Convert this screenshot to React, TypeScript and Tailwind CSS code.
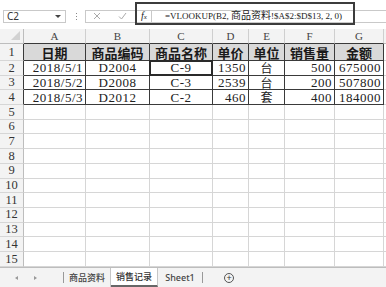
import React from "react";

const cols = ["A", "B", "C", "D", "E", "F", "G"];
const heads = ["日期", "商品编码", "商品名称", "单价", "单位", "销售量", "金额"];
const rows = [
  ["2018/5/1", "D2004", "C-9", "1350", "台", "500", "675000"],
  ["2018/5/2", "D2008", "C-3", "2539", "台", "200", "507800"],
  ["2018/5/3", "D2012", "C-2", "460", "套", "400", "184000"],
];
const align = [
  "justify-end pr-[2px]",
  "justify-center",
  "justify-center",
  "justify-end pr-[2px]",
  "justify-center",
  "justify-end pr-[2px]",
  "justify-end pr-[2px]",
];

const serif = "font-['Liberation_Serif','Noto_Sans_CJK_SC',serif]";
const sans = "font-['Noto_Sans','Noto_Sans_CJK_SC',sans-serif]";
const cjk = "font-['Noto_Sans_CJK_SC',sans-serif]";

function FormulaBar() {
  return (
    <div className="relative h-[29px] shrink-0 bg-white flex items-center pt-[3px]">
      {/* Name box */}
      <div className={`ml-[3px] w-[63px] h-[13px] border border-[#c9c9c9] flex items-center justify-between pl-[3px] pr-[4px] text-[10px] text-[#333] ${sans}`}>
        <span>C2</span>
        <span className="w-0 h-0 border-x-[3px] border-x-transparent border-t-[3px] border-t-[#444]" />
      </div>
      {/* Grip */}
      <div className="ml-[10px] flex flex-col gap-[2px]">
        <span className="w-[1px] h-[1px] bg-[#888]" />
        <span className="w-[1px] h-[1px] bg-[#888]" />
        <span className="w-[1px] h-[1px] bg-[#888]" />
      </div>
      {/* Input */}
      <div className="ml-[8px] flex-1 h-[13px] border border-[#c9c9c9] border-r-0 flex items-center">
        <svg width="8" height="8" viewBox="0 0 8 8" className="ml-[7px]">
          <path d="M1 1 L7 7 M7 1 L1 7" stroke="#aaa" strokeWidth="1" />
        </svg>
        <svg width="9" height="8" viewBox="0 0 9 8" className="ml-[17px]">
          <path d="M1 4.5 L3.5 7 L8 1" stroke="#aaa" strokeWidth="1" fill="none" />
        </svg>
        <span className="ml-[14px] text-[10px] italic text-[#222] font-['Liberation_Serif',serif] leading-none">
          f<span className="text-[7px]">x</span>
        </span>
        <span className="ml-[4px] w-[1px] h-[13px] bg-[#c9c9c9]" />
        <span className="ml-[13px] text-[9px] leading-none text-[#222] whitespace-nowrap font-['Liberation_Serif','Noto_Sans_CJK_SC',serif]">
          =VLOOKUP(B2, <span className="text-[10px]">商品资料</span>!$A$2:$D$13, 2, 0)
        </span>
      </div>
      {/* Highlight frame */}
      <div className="absolute left-[135px] top-[2px] w-[220px] h-[23px] border-2 border-[#3c3c3c]" />
    </div>
  );
}

function Sheet() {
  const rowNums = Array.from({ length: 15 }, (_, i) => i + 1);
  return (
    <div className="flex-1 overflow-hidden bg-white">
      <div className="grid grid-cols-[24px_62px_64px_63px_36px_36px_50px_49px_1fr] grid-rows-[15px_17px_repeat(15,14.7px)] leading-none">
        {/* Column header */}
        <div className="relative bg-[#f3f3f3] border-r border-b border-[#bdbdbd]">
          <span className="absolute right-[3px] bottom-[3px] w-0 h-0 border-l-[9px] border-l-transparent border-b-[9px] border-b-[#d2d2d2]" />
        </div>
        {cols.map((c) => (
          <div
            key={c}
            className={`bg-[#f3f3f3] border-r border-[#cfcfcf] border-b border-b-[#3a3a3a] flex items-center justify-center text-[11px] text-[#444] ${serif}`}
          >
            {c}
          </div>
        ))}
        <div className="bg-[#f3f3f3] border-b border-[#bdbdbd]" />

        {rowNums.map((n) => {
          const inTable = n <= 4;
          return (
            <React.Fragment key={n}>
              <div
                className={`bg-[#f3f3f3] border-b border-[#d6d6d6] border-r flex items-center justify-center text-[12.5px] text-[#333] ${serif} ${
                  inTable ? "border-r-[#3a3a3a]" : "border-r-[#bdbdbd]"
                }`}
              >
                {n}
              </div>
              {cols.map((c, ci) => {
                if (n === 1) {
                  return (
                    <div
                      key={c}
                      className={`bg-[#d9d9d9] border-r border-b border-[#3a3a3a] flex items-center justify-center text-[13px] font-bold text-[#1a1a1a] ${cjk}`}
                    >
                      {heads[ci]}
                    </div>
                  );
                }
                if (inTable) {
                  const v = rows[n - 2][ci];
                  const sel = n === 2 && c === "C";
                  const font = c === "E" ? `${cjk} text-[12px]` : `${serif} text-[13px] tracking-[0.5px]`;
                  return (
                    <div
                      key={c}
                      className={`relative border-r border-b border-[#3a3a3a] flex items-center text-[#222] ${font} ${align[ci]}`}
                    >
                      {v}
                      {sel && <span className="absolute -left-[1px] -top-[1px] -right-[1px] -bottom-[1px] border-2 border-[#2a2a2a]" />}
                    </div>
                  );
                }
                return <div key={c} className="border-r border-b border-[#d6d6d6]" />;
              })}
              <div className="border-b border-[#d6d6d6]" />
            </React.Fragment>
          );
        })}
      </div>
    </div>
  );
}

function Tabs() {
  return (
    <div className={`h-[20px] shrink-0 bg-[#f3f3f3] border-t border-[#bdbdbd] flex items-stretch text-[9px] text-[#444] ${sans}`}>
      <div className="w-[63px] flex items-center">
        <span className="ml-[15px] w-0 h-0 border-y-[2.5px] border-y-transparent border-r-[3px] border-r-[#999]" />
        <span className="ml-[16px] w-0 h-0 border-y-[2.5px] border-y-transparent border-l-[3px] border-l-[#999]" />
      </div>
      <div className="my-[4px] w-[1px] bg-[#999]" />
      <div className="w-[47px] border-r border-[#c6c6c6] flex items-center justify-center font-medium">
        商品资料
      </div>
      <div className="w-[47px] bg-white border-r border-[#c6c6c6] border-b-2 border-b-[#666] flex items-center justify-center font-medium text-[#333]">
        销售记录
      </div>
      <div className="w-[44px] flex items-center justify-center font-medium">Sheet1</div>
      <div className="my-[4px] w-[1px] bg-[#999]" />
      <div className="ml-[21px] flex items-center">
        <span className="w-[10px] h-[10px] rounded-full border border-[#555] flex items-center justify-center text-[9px] leading-none text-[#333]">
          +
        </span>
      </div>
    </div>
  );
}

export default function App() {
  return (
    <div className="w-[386px] h-[287px] flex flex-col overflow-hidden bg-white">
      <FormulaBar />
      <Sheet />
      <Tabs />
    </div>
  );
}
